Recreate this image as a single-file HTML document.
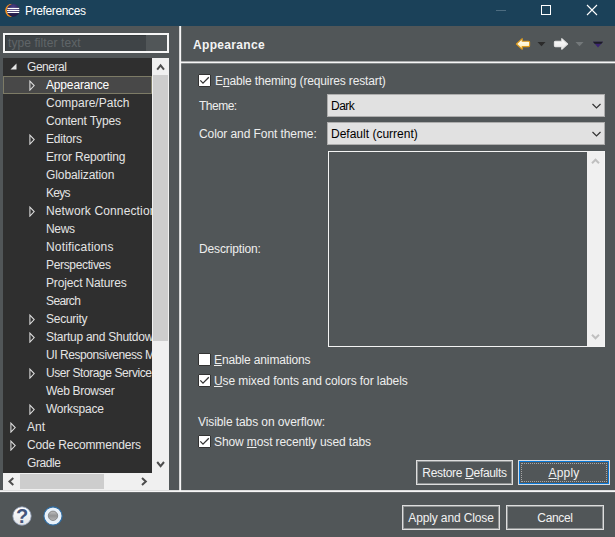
<!DOCTYPE html>
<html><head><meta charset="utf-8">
<style>
html,body{margin:0;padding:0;background:#515658;}
body{width:615px;height:537px;overflow:hidden;background:#515658;font-family:"Liberation Sans",sans-serif;font-size:12px;color:#eeeeee;position:relative;}
.abs{position:absolute;}
.t{position:absolute;white-space:nowrap;line-height:14px;height:14px;}
#title{left:0;top:0;width:615px;height:26px;background:#1b4159;}
#tree{left:3px;top:58px;width:149px;height:415px;background:#2f2f2f;overflow:hidden;}
.row{position:absolute;left:0;height:18px;line-height:19px;white-space:nowrap;color:#e4e4e4;}
.cb{position:absolute;width:11px;height:11px;border:1px solid #333;background:#fff;border-radius:1px;}
.cb svg{position:absolute;left:-1px;top:-1px;}
.btn{position:absolute;box-sizing:border-box;border:1px solid #dedede;box-shadow:inset 0 0 0 1px rgba(222,222,222,.45);text-align:center;line-height:24px;color:#f2f2f2;}
.foc{position:absolute;left:2px;top:2px;right:2px;bottom:2px;border:1px dotted #a8a8a8;}
.combo{position:absolute;box-sizing:border-box;background:#e1e1e1;border:1px solid #adadad;color:#000;line-height:23px;padding-left:3px;}
u{text-decoration:underline;text-underline-offset:1px;}
</style></head><body>
<div id="title" class="abs"></div>
<svg class="abs" style="left:4px;top:2px" width="18" height="18" viewBox="0 0 18 18">
<defs><radialGradient id="eg" cx="0.5" cy="0.25" r="0.8"><stop offset="0" stop-color="#4a3f86"/><stop offset="0.6" stop-color="#2c2255"/><stop offset="1" stop-color="#1e173f"/></radialGradient></defs>
<clipPath id="oc"><rect x="0" y="1.5" width="7.5" height="13.6"/></clipPath><circle cx="7.9" cy="8.4" r="6.7" fill="#f7941e" clip-path="url(#oc)"/>
<circle cx="9.2" cy="8.3" r="6.4" fill="url(#eg)"/>
<rect x="3.4" y="5.9" width="11.8" height="1.2" fill="#fff"/>
<rect x="3" y="7.9" width="12.4" height="1.1" fill="#fff"/>
<rect x="3.4" y="9.8" width="11.8" height="1.2" fill="#fff"/>
</svg>
<div class="t" id="ttl" style="letter-spacing:-0.364px;left:25px;top:4px;color:#fff;">Preferences</div>
<!-- window controls -->
<div class="abs" style="left:496px;top:10px;width:10px;height:1px;background:#4d6c80"></div>
<div class="abs" style="left:541px;top:5px;width:8px;height:8px;border:1px solid #fff"></div>
<svg class="abs" style="left:586px;top:4px" width="12" height="12" viewBox="0 0 12 12"><path d="M1 1L11 11M11 1L1 11" stroke="#fff" stroke-width="1.1" fill="none"/></svg>

<!-- filter -->
<div class="abs" style="left:3px;top:33px;width:162px;height:16px;border:2px solid #f6f6f6;background:#3f4447;box-shadow:inset 1px 1px 0 #33383a;"></div>
<div class="abs" style="left:146px;top:35px;width:21px;height:16px;background:#515658;"></div>
<div class="t" id="flt" style="letter-spacing:0.083px;left:8px;top:36px;color:#5f6467;">type filter text</div>

<!-- tree -->
<div id="tree" class="abs">
<div class="abs" style="left:0;top:18px;width:147px;height:16px;border:1px solid #7d7b66;background:#484848"></div>
<svg class="abs" style="left:7px;top:5px" width="7" height="7" viewBox="0 0 7 7"><path d="M6.5 0.5V6.5H0.5Z" fill="#e6e6e6"/></svg>
<div class="row" id="r0" style="left:24px;top:0px;letter-spacing:-0.458px;">General</div>
<svg class="abs" style="left:26px;top:22px" width="7" height="11" viewBox="0 0 7 11"><path d="M0.9 1.1L5.2 5.6L0.9 10.1Z" fill="none" stroke="#dedede" stroke-width="1.05"/></svg>
<div class="row" id="r1" style="left:43px;top:18px;color:#fff;letter-spacing:-0.162px;">Appearance</div>
<div class="row" id="r2" style="left:43px;top:36px;letter-spacing:0.002px;">Compare/Patch</div>
<div class="row" id="r3" style="left:43px;top:54px;letter-spacing:-0.190px;">Content Types</div>
<svg class="abs" style="left:26px;top:76px" width="7" height="11" viewBox="0 0 7 11"><path d="M0.9 1.1L5.2 5.6L0.9 10.1Z" fill="none" stroke="#dedede" stroke-width="1.05"/></svg>
<div class="row" id="r4" style="left:43px;top:72px;letter-spacing:-0.237px;">Editors</div>
<div class="row" id="r5" style="left:43px;top:90px;letter-spacing:-0.182px;">Error Reporting</div>
<div class="row" id="r6" style="left:43px;top:108px;letter-spacing:-0.083px;">Globalization</div>
<div class="row" id="r7" style="left:43px;top:126px;letter-spacing:-0.722px;">Keys</div>
<svg class="abs" style="left:26px;top:148px" width="7" height="11" viewBox="0 0 7 11"><path d="M0.9 1.1L5.2 5.6L0.9 10.1Z" fill="none" stroke="#dedede" stroke-width="1.05"/></svg>
<div class="row" id="r8" style="left:43px;top:144px;letter-spacing:0.136px;">Network Connections</div>
<div class="row" id="r9" style="left:43px;top:162px;letter-spacing:-0.304px;">News</div>
<div class="row" id="r10" style="left:43px;top:180px;letter-spacing:0.171px;">Notifications</div>
<div class="row" id="r11" style="left:43px;top:198px;letter-spacing:-0.342px;">Perspectives</div>
<div class="row" id="r12" style="left:43px;top:216px;letter-spacing:-0.140px;">Project Natures</div>
<div class="row" id="r13" style="left:43px;top:234px;letter-spacing:-0.622px;">Search</div>
<svg class="abs" style="left:26px;top:256px" width="7" height="11" viewBox="0 0 7 11"><path d="M0.9 1.1L5.2 5.6L0.9 10.1Z" fill="none" stroke="#dedede" stroke-width="1.05"/></svg>
<div class="row" id="r14" style="left:43px;top:252px;letter-spacing:-0.257px;">Security</div>
<svg class="abs" style="left:26px;top:274px" width="7" height="11" viewBox="0 0 7 11"><path d="M0.9 1.1L5.2 5.6L0.9 10.1Z" fill="none" stroke="#dedede" stroke-width="1.05"/></svg>
<div class="row" id="r15" style="left:43px;top:270px;letter-spacing:-0.262px;">Startup and Shutdown</div>
<div class="row" id="r16" style="left:43px;top:288px;letter-spacing:-0.429px;">UI Responsiveness Monitoring</div>
<svg class="abs" style="left:26px;top:310px" width="7" height="11" viewBox="0 0 7 11"><path d="M0.9 1.1L5.2 5.6L0.9 10.1Z" fill="none" stroke="#dedede" stroke-width="1.05"/></svg>
<div class="row" id="r17" style="left:43px;top:306px;letter-spacing:-0.427px;">User Storage Service</div>
<div class="row" id="r18" style="left:43px;top:324px;letter-spacing:-0.310px;">Web Browser</div>
<svg class="abs" style="left:26px;top:346px" width="7" height="11" viewBox="0 0 7 11"><path d="M0.9 1.1L5.2 5.6L0.9 10.1Z" fill="none" stroke="#dedede" stroke-width="1.05"/></svg>
<div class="row" id="r19" style="left:43px;top:342px;letter-spacing:-0.246px;">Workspace</div>
<svg class="abs" style="left:7px;top:364px" width="7" height="11" viewBox="0 0 7 11"><path d="M0.9 1.1L5.2 5.6L0.9 10.1Z" fill="none" stroke="#dedede" stroke-width="1.05"/></svg>
<div class="row" id="r20" style="left:24px;top:360px;letter-spacing:0.028px;">Ant</div>
<svg class="abs" style="left:7px;top:382px" width="7" height="11" viewBox="0 0 7 11"><path d="M0.9 1.1L5.2 5.6L0.9 10.1Z" fill="none" stroke="#dedede" stroke-width="1.05"/></svg>
<div class="row" id="r21" style="left:24px;top:378px;letter-spacing:-0.172px;">Code Recommenders</div>
<div class="row" id="r22" style="left:24px;top:396px;letter-spacing:-0.422px;">Gradle</div>
</div>
<!-- tree scrollbars -->
<div class="abs" style="left:152px;top:58px;width:17px;height:432px;background:#f0f0f0"></div>
<div class="abs" style="left:153px;top:75px;width:15px;height:266px;background:#cdcdcd"></div>
<div class="abs" style="left:3px;top:473px;width:166px;height:17px;background:#f0f0f0"></div>
<div class="abs" style="left:20px;top:474px;width:84px;height:15px;background:#cdcdcd"></div>
<svg class="abs" style="left:152px;top:58px" width="17" height="17" viewBox="0 0 17 17"><path d="M5.2 11.6L8.6 7.4L12 11.6" stroke="#4d4d4d" stroke-width="2" fill="none"/></svg>
<svg class="abs" style="left:152px;top:456px" width="17" height="17" viewBox="0 0 17 17"><path d="M5.2 6L8.6 10.2L12 6" stroke="#4d4d4d" stroke-width="2" fill="none"/></svg>
<svg class="abs" style="left:3px;top:473px" width="17" height="17" viewBox="0 0 17 17"><path d="M10.3 5.1L6.5 8.5L10.3 11.9" stroke="#4d4d4d" stroke-width="2" fill="none"/></svg>
<svg class="abs" style="left:135px;top:473px" width="17" height="17" viewBox="0 0 17 17"><path d="M7 5.1L10.8 8.5L7 11.9" stroke="#4d4d4d" stroke-width="2" fill="none"/></svg>

<!-- sash + separators -->
<div class="abs" style="left:180px;top:26px;width:1px;height:465px;background:#f6f6f6;"></div><div class="abs" style="left:181px;top:26px;width:1px;height:465px;background:rgba(246,246,246,.15);"></div><div class="abs" style="left:179px;top:26px;width:1px;height:465px;background:rgba(246,246,246,.8);"></div>
<div class="abs" style="left:181px;top:62px;width:434px;height:1px;background:#f6f6f6;"></div><div class="abs" style="left:181px;top:61px;width:434px;height:1px;background:rgba(246,246,246,.55);"></div><div class="abs" style="left:181px;top:63px;width:434px;height:1px;background:rgba(246,246,246,.3);"></div>
<div class="abs" style="left:0;top:491px;width:615px;height:1px;background:#f6f6f6;"></div><div class="abs" style="left:0;top:490px;width:615px;height:1px;background:rgba(246,246,246,.85);"></div><div class="abs" style="left:0;top:492px;width:615px;height:1px;background:rgba(246,246,246,.12);"></div>

<!-- toolbar -->
<svg class="abs" style="left:514px;top:36px" width="92" height="16" viewBox="0 0 92 16">
<defs><linearGradient id="ya" x1="0" y1="0" x2="0" y2="1"><stop offset="0" stop-color="#ffffff"/><stop offset="0.5" stop-color="#fff6d8"/><stop offset="1" stop-color="#ffe49a"/></linearGradient>
<linearGradient id="wa" x1="0" y1="0" x2="0" y2="1"><stop offset="0" stop-color="#ffffff"/><stop offset="1" stop-color="#e6e6e6"/></linearGradient></defs>
<path d="M2.4 8L8.2 2.7V5.3H14.6Q15.6 5.3 15.6 6.3V9.6Q15.6 10.6 14.6 10.6H8.2V13.3Z" fill="url(#ya)" stroke="#dd9a1c" stroke-width="1.1" stroke-linejoin="round"/>
<path d="M23.5 6H31.5L27.5 10.3Z" fill="#2b2b2b"/>
<path d="M53.6 8L47.8 2.7V5.3H41.4Q40.4 5.3 40.4 6.3V9.6Q40.4 10.6 41.4 10.6H47.8V13.3Z" fill="url(#wa)" stroke="#e4e4e4" stroke-width="1.1" stroke-linejoin="round"/>
<path d="M61.5 6H69.5L65.5 10.3Z" fill="#73787a"/>
<path d="M79 5.8H89L84 11.6Z" fill="#3a2370"/>
<path d="M79 5.8H89L87.4 7.7H80.6Z" fill="#1c1c24"/>
</svg>
<!-- header -->
<div class="t" id="hdr" style="letter-spacing:0.330px;left:193px;top:38px;font-weight:bold;font-size:12px;color:#f4f4f4">Appearance</div>

<!-- content -->
<div class="cb" style="left:198px;top:74px"><svg width="13" height="13" viewBox="0 0 13 13"><path d="M2.3 6.4L5 9.1L10.8 3.3" stroke="#333" stroke-width="1.3" fill="none"/></svg></div>
<div class="t" id="l1" style="letter-spacing:-0.144px;left:215px;top:74px">E<u>n</u>able theming (requires restart)</div>
<div class="t" id="l2" style="letter-spacing:-0.498px;left:199px;top:99px">Theme:</div>
<div class="combo" style="left:327px;top:94px;width:278px;height:23px"><span id="c1" style="letter-spacing:-0.511px;">Dark</span></div>
<div class="t" id="l3" style="letter-spacing:-0.081px;left:199px;top:127px">Color and Font theme:</div>
<div class="combo" style="left:327px;top:122px;width:278px;height:23px"><span id="c2" style="letter-spacing:0.006px;">Default (current)</span></div>
<div class="abs" style="left:328px;top:151px;width:275px;height:194px;border:1px solid #f4f4f4;"></div>
<div class="abs" style="left:587px;top:152px;width:17px;height:194px;background:#f0f0f0"></div>
<svg class="abs" style="left:590px;top:100px" width="14" height="40" viewBox="0 0 14 40"><path d="M2.5 4L6.5 8L10.5 4" stroke="#333" stroke-width="1.2" fill="none"/><path d="M2.5 32L6.5 36L10.5 32" stroke="#333" stroke-width="1.2" fill="none"/></svg>
<svg class="abs" style="left:587px;top:152px" width="17" height="194" viewBox="0 0 17 194"><path d="M5 11.2L8.5 7.7L12 11.2" stroke="#bfbfbf" stroke-width="2" fill="none"/><path d="M5 182.8L8.5 186.3L12 182.8" stroke="#bfbfbf" stroke-width="2" fill="none"/></svg>
<div class="t" id="l4" style="letter-spacing:-0.138px;left:199px;top:242px">Description:</div>
<div class="cb" style="left:198px;top:353px"></div>
<div class="t" id="l5" style="letter-spacing:-0.132px;left:214px;top:353px"><u>E</u>nable animations</div>
<div class="cb" style="left:198px;top:374px"><svg width="13" height="13" viewBox="0 0 13 13"><path d="M2.3 6.4L5 9.1L10.8 3.3" stroke="#333" stroke-width="1.3" fill="none"/></svg></div>
<div class="t" id="l6" style="letter-spacing:-0.083px;left:214px;top:374px"><u>U</u>se mixed fonts and colors for labels</div>
<div class="t" id="l7" style="letter-spacing:-0.087px;left:198px;top:415px">Visible tabs on overflow:</div>
<div class="cb" style="left:198px;top:435px"><svg width="13" height="13" viewBox="0 0 13 13"><path d="M2.3 6.4L5 9.1L10.8 3.3" stroke="#333" stroke-width="1.3" fill="none"/></svg></div>
<div class="t" id="l8" style="letter-spacing:-0.110px;left:214px;top:435px">Show <u>m</u>ost recently used tabs</div>

<!-- bottom icons -->
<svg class="abs" style="left:11px;top:505px" width="54" height="22" viewBox="0 0 54 22">
<defs><linearGradient id="hg" x1="0" y1="0" x2="0" y2="1"><stop offset="0" stop-color="#ffffff"/><stop offset="1" stop-color="#e2e4e8"/></linearGradient>
<linearGradient id="gg" x1="0" y1="0" x2="0" y2="1"><stop offset="0" stop-color="#c2c2c2"/><stop offset="0.5" stop-color="#929292"/><stop offset="1" stop-color="#b6b6b6"/></linearGradient></defs>
<circle cx="11" cy="11" r="9.2" fill="url(#hg)" stroke="#8e9db8" stroke-width="0.8"/>
<text x="11.1" y="17.6" text-anchor="middle" font-family="Liberation Sans, sans-serif" font-weight="bold" font-size="20" fill="#44557d">?</text>
<circle cx="42" cy="11" r="9.1" fill="#e9f1f9" stroke="#2f6ea6" stroke-width="1.1"/>
<circle cx="42" cy="10.8" r="4.7" fill="url(#gg)" stroke="#7a7a7a" stroke-width="0.8"/>
</svg>
<div class="btn" style="left:416px;top:460px;width:97px;height:25px"><span id="b1" style="letter-spacing:-0.312px;">Restore <u>D</u>efaults</span></div>
<div class="btn" style="left:518px;top:460px;width:92px;height:25px;border-color:#d8dde2;box-shadow:inset 0 0 0 1px #0a78d7"><div class="foc"></div><span id="b2" style="letter-spacing:0.194px;"><u>A</u>pply</span></div>
<div class="btn" style="left:402px;top:505px;width:98px;height:25px"><span id="b3" style="letter-spacing:-0.133px;">Apply and Close</span></div>
<div class="btn" style="left:506px;top:505px;width:98px;height:25px"><span id="b4" style="letter-spacing:-0.327px;">Cancel</span></div>
</body></html>
